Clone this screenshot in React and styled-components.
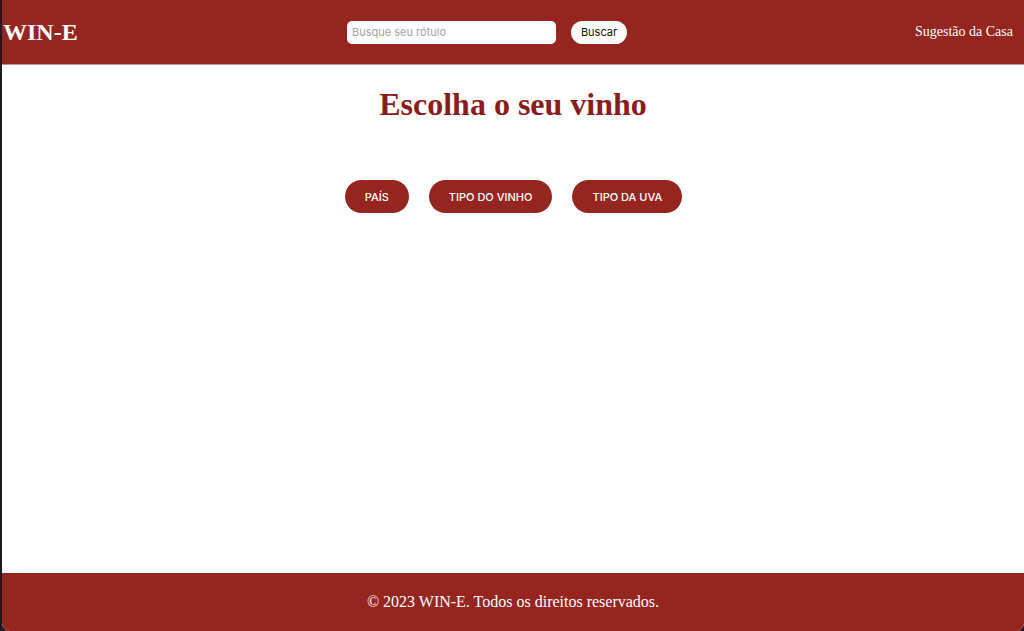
import React from 'react'
import styled, { createGlobalStyle } from 'styled-components'

const GlobalStyle = createGlobalStyle`
  html, body {
    margin: 0;
    padding: 0;
    background: #1c1c1c;
  }
  #root {
    min-height: 100vh;
  }
`

const filters = ['PAÍS', 'TIPO DO VINHO', 'TIPO DA UVA']

const App = () => {
  return (
    <>
      <GlobalStyle />
      <Page>
        <Header>
          <Logo>WIN-E</Logo>
          <SearchForm onSubmit={e => e.preventDefault()}>
            <SearchInput type="text" placeholder="Busque seu rótulo" />
            <SearchButton type="submit">Buscar</SearchButton>
          </SearchForm>
          <NavLink href="#">Sugestão da Casa</NavLink>
        </Header>
        <Main>
          <Title>Escolha o seu vinho</Title>
          <Filters>
            {filters.map(f => (
              <FilterButton key={f}>{f}</FilterButton>
            ))}
          </Filters>
        </Main>
        <Footer>© 2023 WIN-E. Todos os direitos reservados.</Footer>
      </Page>
    </>
  )
}

const Page = styled.div`
  min-height: 631px;
  height: 100vh;
  margin-left: 2px;
  display: flex;
  flex-direction: column;
  background: #fff;
  border-bottom-right-radius: 8px;
  border-bottom-left-radius: 8px;
  overflow: hidden;
  font-family: "Liberation Serif", "Times New Roman", serif;
`

const Header = styled.header`
  height: 64px;
  flex-shrink: 0;
  background: #962520;
  display: flex;
  align-items: center;
  justify-content: space-between;
  padding: 0 11px 0 1px;
  border-bottom: 1px solid #b89a98;
`

const Logo = styled.h1`
  margin: 0;
  font-size: 24px;
  font-weight: bold;
  color: #fff;
  width: 330px;
`

const SearchForm = styled.form`
  display: flex;
  align-items: center;
  gap: 15px;
  margin-right: 42px;
`

const SearchInput = styled.input`
  width: 209px;
  height: 23px;
  box-sizing: border-box;
  border: none;
  border-radius: 5px;
  padding: 0 5px;
  font-family: "Inter", "Liberation Sans", sans-serif;
  font-size: 11px;
  outline: none;
  &::placeholder {
    color: #a3a3a3;
  }
`

const SearchButton = styled.button`
  width: 56px;
  height: 23px;
  border: none;
  border-radius: 12px;
  background: #fff;
  color: #111;
  font-family: "Inter", "Liberation Sans", sans-serif;
  font-size: 11px;
  cursor: pointer;
`

const NavLink = styled.a`
  width: 330px;
  text-align: right;
  color: #fff;
  font-size: 14px;
  text-decoration: none;
`

const Main = styled.main`
  flex: 1;
  display: flex;
  flex-direction: column;
  align-items: center;
`

const Title = styled.h2`
  margin: 21px 0 0;
  font-size: 32px;
  font-weight: bold;
  color: #8a1c1b;
`

const Filters = styled.div`
  display: flex;
  gap: 20px;
  margin-top: 57px;
  margin-left: 1px;
`

const FilterButton = styled.button`
  height: 33px;
  padding: 0 20px;
  border: none;
  border-radius: 17px;
  background: #962520;
  color: #fff;
  font-family: "Inter", "Liberation Sans", sans-serif;
  font-size: 11px;
  font-weight: 500;
  cursor: pointer;
`

const Footer = styled.footer`
  height: 58px;
  flex-shrink: 0;
  background: #962520;
  color: #fff;
  display: flex;
  align-items: center;
  justify-content: center;
  font-size: 16px;
`

export default App
